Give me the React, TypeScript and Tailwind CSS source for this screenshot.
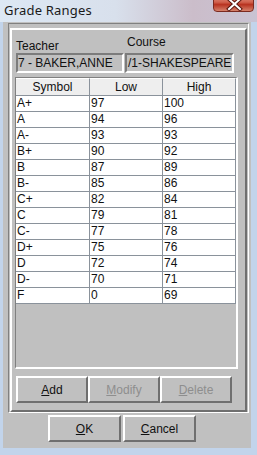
import React from "react";

const rows: [string, string, string][] = [
  ["A+", "97", "100"],
  ["A", "94", "96"],
  ["A-", "93", "93"],
  ["B+", "90", "92"],
  ["B", "87", "89"],
  ["B-", "85", "86"],
  ["C+", "82", "84"],
  ["C", "79", "81"],
  ["C-", "77", "78"],
  ["D+", "75", "76"],
  ["D", "72", "74"],
  ["D-", "70", "71"],
  ["F", "0", "69"],
];

function Btn({
  w,
  label,
  u,
  disabled,
}: {
  w: string;
  label: string;
  u: number;
  disabled?: boolean;
}) {
  return (
    <div
      className={`${w} h-[27px] shrink-0 border-2 border-t-white border-l-white border-r-[#6f6f6f] border-b-[#6f6f6f] bg-[#c0c0c0] flex items-center justify-center text-[12px] leading-[14px] ${
        disabled ? "text-[#8e8e8e]" : "text-[#111111]"
      }`}
    >
      <span>
        {label.slice(0, u)}
        <span className="underline">{label[u]}</span>
        {label.slice(u + 1)}
      </span>
    </div>
  );
}

export default function App() {
  return (
    <div
      className="w-[257px] h-[455px] overflow-hidden bg-[#c2d4eb] flex flex-col"
      style={{ fontFamily: '"Liberation Sans", Arial, sans-serif' }}
    >
      {/* Title bar */}
      <div className="relative h-[22px] shrink-0 bg-[linear-gradient(90deg,#dde8f4_0%,#d8e0ec_45%,#cbbdca_75%,#c9c3d3_100%)]">
        <div
          className="absolute left-[4px] top-[2px] text-[13px] leading-[16px] tracking-[0.2px] text-[#1a1a1a]"
          style={{ fontFamily: '"Noto Sans", "Open Sans", sans-serif' }}
        >
          Grade Ranges
        </div>
        <div className="absolute left-[213px] top-[-6px] w-[41px] h-[18px] rounded-b-[4px] border border-[#7b2a20] bg-[linear-gradient(180deg,#e39a8a_0%,#d0604c_45%,#b83320_60%,#d6826c_100%)] overflow-hidden">
          <svg width="41" height="18" viewBox="0 0 41 18" className="absolute left-0 top-0">
            <path d="M15 4 L26 14 M26 4 L15 14" stroke="#5a1810" strokeWidth="4" strokeLinecap="square" />
            <path d="M15 4 L26 14 M26 4 L15 14" stroke="#ffffff" strokeWidth="2" strokeLinecap="square" />
          </svg>
        </div>
      </div>

      <div className="flex h-[426px] shrink-0">
        <div className="w-[3px] shrink-0" />
        {/* Content area */}
        <div className="w-[248px] shrink-0 bg-[#c0c0c0] flex flex-col">
          {/* Outer etched box */}
          <div className="ml-[5px] mt-[1px] w-[241px] h-[390px] border border-t-[#808080] border-l-[#808080] border-r-white border-b-white pl-[1px] pt-[4px]">
            {/* Inner raised box */}
            <div className="w-[237px] h-[384px] border-2 border-t-white border-l-white border-r-[#6f6f6f] border-b-[#6f6f6f] flex flex-col text-[12px] text-[#111111]">
              {/* Labels + fields */}
              <div className="flex items-end pt-[5px] pl-[4px]">
                <div className="w-[109px] flex flex-col">
                  <div className="h-[14px] leading-[14px]">Teacher</div>
                  <div className="w-[108px] h-[20px] border-2 border-t-[#7c7c7c] border-l-[#7c7c7c] border-r-white border-b-white leading-[16px] whitespace-nowrap overflow-hidden">
                    7 - BAKER,ANNE
                  </div>
                </div>
                <div className="flex flex-col">
                  <div className="h-[14px] leading-[14px] pl-[2px] mb-[4px]">Course</div>
                  <div className="w-[109px] h-[20px] border-2 border-t-[#7c7c7c] border-l-[#7c7c7c] border-r-white border-b-white leading-[16px] whitespace-nowrap overflow-hidden pl-[1px]">
                    /1-SHAKESPEARE
                  </div>
                </div>
              </div>

              {/* Table */}
              <div className="ml-[3px] mt-[4px] w-[223px] h-[292px] border-t border-l border-t-[#808080] border-l-[#808080] border-r-2 border-b-2 border-r-white border-b-white flex flex-col">
                <div className="flex h-[18px] bg-[#eeeeee] border-b border-[#8a929b]">
                  <div className="w-[74px] border-r border-[#8a929b] text-center leading-[17px] border-t border-t-white">Symbol</div>
                  <div className="w-[73px] border-r border-[#8a929b] text-center leading-[17px] border-t border-t-white">Low</div>
                  <div className="w-[73px] border-r border-[#8a929b] text-center leading-[17px] border-t border-t-white">High</div>
                </div>
                {rows.map((r) => (
                  <div key={r[0]} className="flex h-[16px] bg-white border-b border-[#8a929b]">
                    <div className="w-[74px] border-r border-[#8a929b] pl-[1px] leading-[15px]">{r[0]}</div>
                    <div className="w-[73px] border-r border-[#8a929b] pl-[1px] leading-[15px]">{r[1]}</div>
                    <div className="w-[73px] border-r border-[#8a929b] pl-[1px] leading-[15px]">{r[2]}</div>
                  </div>
                ))}
              </div>

              {/* Buttons */}
              <div className="flex ml-[4px] mt-[7px]">
                <Btn w="w-[72px]" label="Add" u={0} />
                <Btn w="w-[72px]" label="Modify" u={0} disabled />
                <Btn w="w-[72px]" label="Delete" u={0} disabled />
              </div>
            </div>
          </div>

          {/* OK / Cancel */}
          <div className="flex gap-[2px] ml-[45px] mt-[2px]">
            <Btn w="w-[73px]" label="OK" u={0} />
            <Btn w="w-[73px]" label="Cancel" u={0} />
          </div>
        </div>
        <div className="w-[6px] shrink-0" />
      </div>
    </div>
  );
}
